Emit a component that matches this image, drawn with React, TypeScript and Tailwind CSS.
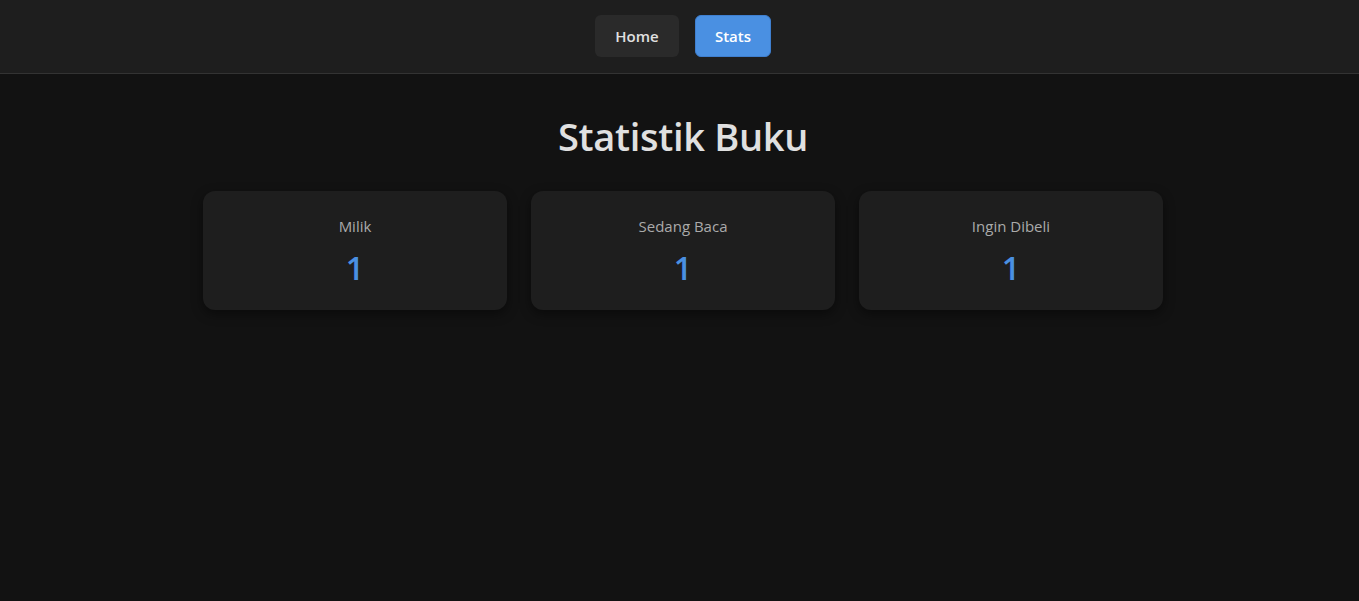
import React from "react";

export default function App() {
  const stats = [
    { label: "Milik", value: 1 },
    { label: "Sedang Baca", value: 1 },
    { label: "Ingin Dibeli", value: 1 },
  ];
  return (
    <div
      className="min-h-[601px] bg-[#121212] text-[#e0e0e0]"
      style={{ fontFamily: '"Open Sans", "Noto Sans", sans-serif' }}
    >
      <nav className="h-[74px] bg-[#1e1e1e] border-b border-[#333333] flex items-start pt-[15px] justify-center gap-4 pl-[7px]">
        <button className="w-[84px] h-[42px] rounded-[6px] bg-[#2a2a2a] text-[15px] font-semibold text-[#e0e0e0]">
          Home
        </button>
        <button className="w-[76px] h-[42px] rounded-[6px] bg-[#4a90e2] border border-[#3f7fcf] text-[15px] font-semibold text-white">
          Stats
        </button>
      </nav>
      <main className="pl-[7px]">
        <h1 className="mt-[37px] text-center text-[38px] leading-[50px] font-semibold text-[#e0e0e0] tracking-[-0.3px]">
          Statistik Buku
        </h1>
        <div className="mt-[30px] w-[960px] mx-auto grid grid-cols-3 gap-6">
          {stats.map((s) => (
            <div
              key={s.label}
              className="h-[119px] rounded-[12px] bg-[#1e1e1e] shadow-[0_4px_12px_rgba(0,0,0,0.45)] flex flex-col items-center pt-[24px]"
            >
              <div className="text-[15px] leading-[22px] text-[#aaaaaa]">{s.label}</div>
              <div className="mt-[11px] text-[32px] leading-[40px] font-semibold text-[#4a90e2]">
                {s.value}
              </div>
            </div>
          ))}
        </div>
      </main>
    </div>
  );
}
